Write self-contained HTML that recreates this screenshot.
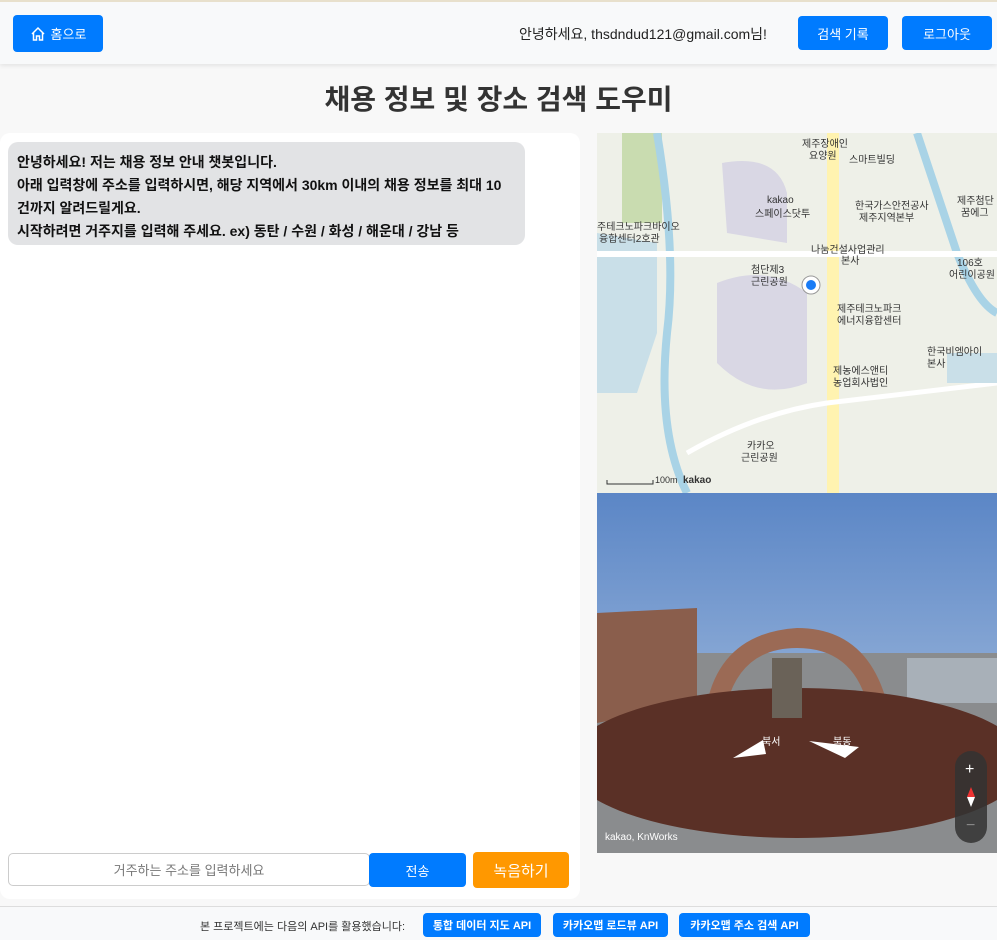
<!DOCTYPE html>
<html><head><meta charset="utf-8">
<style>
*{box-sizing:border-box;margin:0;padding:0}
body{width:997px;height:940px;background:#f8f8f8;font-family:"Liberation Sans","Noto Sans CJK KR",sans-serif;position:relative;overflow:hidden;color:#222}
.top{position:absolute;left:0;top:0;width:997px;height:64px;background:#f8f9fa;border-top:2px solid #e8e0cc;box-shadow:0 2px 4px rgba(0,0,0,.08)}
.btn{position:absolute;background:#007bff;color:#fff;border-radius:4px;font-size:13px;display:flex;align-items:center;justify-content:center}
h1{position:absolute;top:78px;left:0;width:997px;text-align:center;font-size:28px;font-weight:bold;color:#333}
.chat{position:absolute;left:0;top:133px;width:580px;height:766px;background:#fff;border-radius:10px}
.bubble{position:absolute;left:8px;top:9px;width:517px;height:103px;background:#e2e3e5;border-radius:10px;padding:9px 9px;font-size:14px;line-height:23px;font-weight:bold;color:#111}
.inp{position:absolute;left:8px;top:720px;width:362px;height:33px;border:1px solid #ccc;border-radius:5px;font-size:13px;color:#777;display:flex;align-items:center;justify-content:center}
.foot{position:absolute;left:0;top:906px;width:997px;height:34px;background:#f8f9fa;border-top:1px solid #ddd}
</style></head><body>
<div class="top">
 <div class="btn" style="left:13px;top:13px;width:90px;height:37px">
  <svg width="16" height="16" viewBox="0 0 16 16" style="margin-right:5px"><path d="M2 8L8 2l6 6M3.5 6.5V14h3v-4h3v4h3V6.5" fill="none" stroke="#fff" stroke-width="1.5"/></svg>홈으로</div>
 <div style="position:absolute;left:519px;top:22px;font-size:14px;color:#222">안녕하세요, thsdndud121@gmail.com님!</div>
 <div class="btn" style="left:798px;top:14px;width:90px;height:34px">검색 기록</div>
 <div class="btn" style="left:902px;top:14px;width:90px;height:34px">로그아웃</div>
</div>
<h1>채용 정보 및 장소 검색 도우미</h1>
<div class="chat">
 <div class="bubble">안녕하세요! 저는 채용 정보 안내 챗봇입니다.<br>아래 입력창에 주소를 입력하시면, 해당 지역에서 30km 이내의 채용 정보를 최대 10<br>건까지 알려드릴게요.<br>시작하려면 거주지를 입력해 주세요. ex) 동탄 / 수원 / 화성 / 해운대 / 강남 등</div>
 <div class="inp">거주하는 주소를 입력하세요</div>
 <div class="btn" style="left:369px;top:720px;width:97px;height:34px">전송</div>
 <div class="btn" style="left:473px;top:719px;width:96px;height:36px;background:#ff9800;font-size:15px">녹음하기</div>
</div>
<svg style="position:absolute;left:597px;top:133px" width="400" height="360" viewBox="0 0 400 360">
 <rect width="400" height="360" fill="#eef0e8"/>
 <path d="M0 100 L60 110 L60 200 L40 260 L0 260Z" fill="#c9dfe8"/>
 <rect x="25" y="0" width="40" height="90" fill="#c9dcb0"/>
 <path d="M125 30 Q180 20 190 60 L190 110 L130 100Z" fill="#d9d7e4"/>
 <path d="M120 150 Q170 130 210 160 L210 250 Q160 270 120 230Z" fill="#d9d7e4"/>
 <path d="M60 0 Q80 120 70 200 Q60 300 90 360" fill="none" stroke="#a9d3e6" stroke-width="8"/>
 <path d="M320 0 Q340 60 360 120 Q380 170 400 180" fill="none" stroke="#a9d3e6" stroke-width="8"/>
 <rect x="230" y="0" width="12" height="360" fill="#fff3b0"/>
 <rect x="0" y="118" width="400" height="6" fill="#fff"/>
 <path d="M90 320 Q160 280 230 270 L400 250" fill="none" stroke="#fff" stroke-width="5"/>
 <rect x="350" y="220" width="50" height="30" fill="#c9dfe8"/>
 <circle cx="214" cy="152" r="9" fill="#fff" stroke="#999"/><circle cx="214" cy="152" r="5" fill="#1a7cf5"/>
 <g font-size="10" fill="#333" font-family="Liberation Sans,Noto Sans CJK KR,sans-serif">
  <text x="205" y="14">제주장애인</text><text x="212" y="26">요양원</text>
  <text x="252" y="30">스마트빌딩</text><text x="170" y="70">kakao</text><text x="158" y="84">스페이스닷투</text>
  <text x="258" y="76">한국가스안전공사</text><text x="262" y="88">제주지역본부</text>
  <text x="0" y="97">주테크노파크바이오</text><text x="2" y="109">융합센터2호관</text>
  <text x="214" y="120">나눔건설사업관리</text><text x="244" y="131">본사</text>
  <text x="154" y="140">첨단제3</text><text x="154" y="152">근린공원</text>
  <text x="240" y="179">제주테크노파크</text><text x="240" y="191">에너지융합센터</text>
  <text x="330" y="222">한국비엠아이</text><text x="330" y="234">본사</text>
  <text x="236" y="241">제농에스앤티</text><text x="236" y="253">농업회사법인</text>
  <text x="150" y="316">카카오</text><text x="144" y="328">근린공원</text>
  <text x="360" y="133">106호</text><text x="352" y="145">어린이공원</text>
  <text x="360" y="71">제주첨단</text><text x="364" y="83">꿈에그</text>
  <text x="58" y="350" font-size="9">100m</text><text x="86" y="350" font-weight="bold">kakao</text>
 </g>
 <path d="M10 347V351H56V347" fill="none" stroke="#333"/>
</svg>
<svg style="position:absolute;left:597px;top:493px" width="400" height="360" viewBox="0 0 400 360">
 <defs><linearGradient id="s" x1="0" y1="0" x2="0" y2="1"><stop offset="0" stop-color="#5b86c6"/><stop offset="1" stop-color="#b7cbe4"/></linearGradient></defs>
 <rect width="400" height="360" fill="url(#s)"/>
 <rect x="0" y="160" width="400" height="200" fill="#8a8c8e"/>
 <path d="M0 120 L100 115 L100 210 L0 230Z" fill="#8a5e4c"/>
 <path d="M110 210 Q125 140 200 135 Q270 135 290 210 L270 210 Q255 155 200 155 Q145 155 130 210Z" fill="#9b6a55"/>
 <rect x="310" y="165" width="90" height="45" fill="#a8b0b8"/>
 <ellipse cx="200" cy="270" rx="230" ry="75" fill="#5a3026"/>
 <rect x="175" y="165" width="30" height="60" fill="#6a6258"/>
 <path d="M136 265l30-18 3 14Z" fill="#fff"/><path d="M212 248l50 6-14 11Z" fill="#fff"/>
 <g font-size="10" fill="#fff" font-family="Liberation Sans,Noto Sans CJK KR,sans-serif"><text x="165" y="252">북서</text><text x="236" y="252">북동</text><text x="8" y="347">kakao, KnWorks</text></g>
 <rect x="358" y="258" width="32" height="92" rx="16" fill="#333" opacity=".85"/>
 <text x="368" y="281" fill="#fff" font-size="16">+</text><text x="369" y="337" fill="#888" font-size="16">−</text>
 <path d="M374 294l4 10h-8Z" fill="#e33"/><path d="M374 314l4-10h-8Z" fill="#fff"/>
</svg>
<div class="foot">
 <div style="position:absolute;left:200px;top:11px;font-size:11px;color:#333">본 프로젝트에는 다음의 API를 활용했습니다:</div>
 <div class="btn" style="left:423px;top:6px;width:118px;height:24px;font-size:11px;font-weight:bold">통합 데이터 지도 API</div>
 <div class="btn" style="left:553px;top:6px;width:115px;height:24px;font-size:11px;font-weight:bold">카카오맵 로드뷰 API</div>
 <div class="btn" style="left:679px;top:6px;width:131px;height:24px;font-size:11px;font-weight:bold">카카오맵 주소 검색 API</div>
</div>
</body></html>
